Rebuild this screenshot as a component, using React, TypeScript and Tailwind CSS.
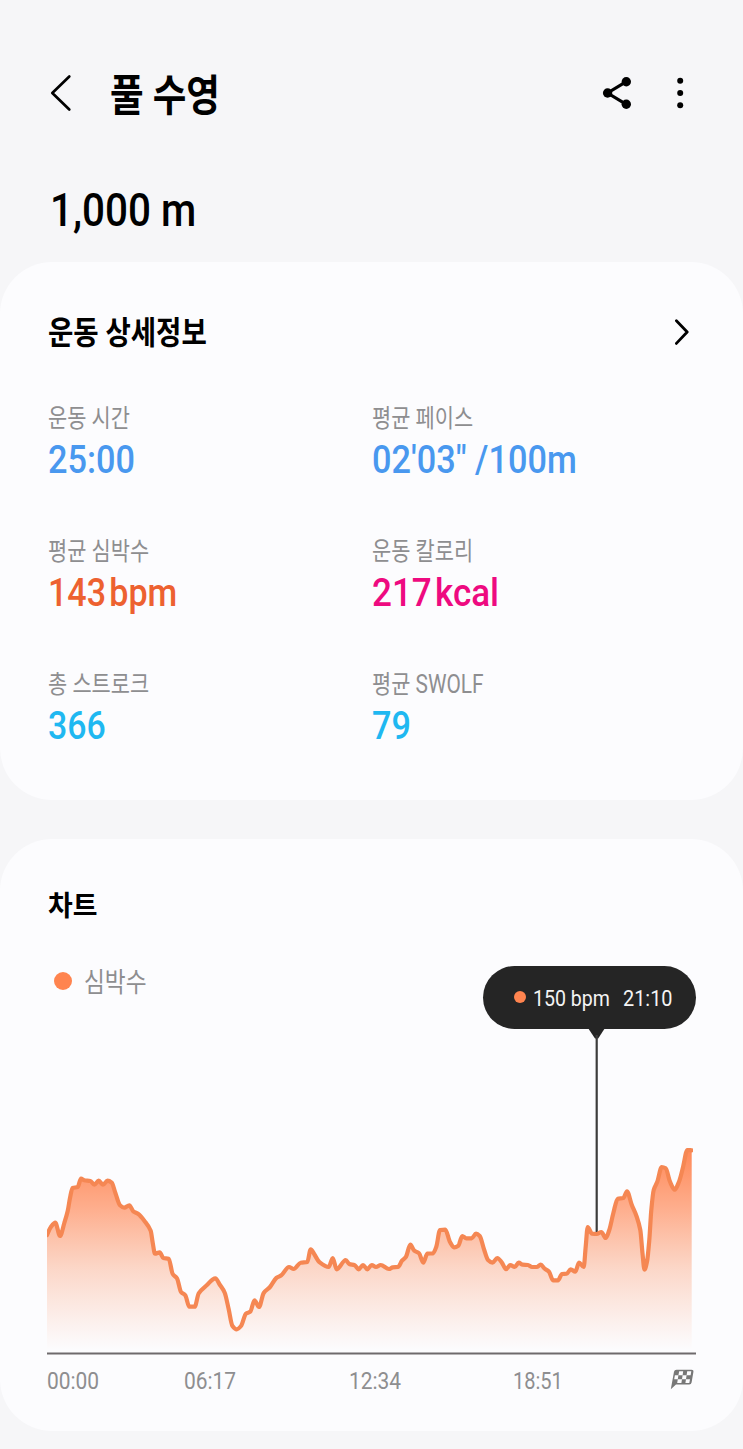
import type { ReactNode } from "react";

type Point = [number, number];

const HEART_RATE: Point[] = [
  [47, 1235], [50.7, 1227.3], [55.3, 1222.7], [60, 1236], [64.3, 1223], [67.7, 1211], [70, 1198], [72.5, 1188],
  [77.7, 1187], [81, 1178.7], [84.3, 1180.3], [90.3, 1181], [94.3, 1184.7], [98.7, 1180.7], [103, 1184.7], [107.5, 1180.7],
  [111.7, 1182.7], [115.3, 1192.7], [120, 1205.3], [124.3, 1207.7], [129.3, 1205.3], [133.3, 1211.3], [138.3, 1214],
  [144.3, 1220.7], [150.7, 1230.7], [152.7, 1242.7], [155, 1253.7], [159.7, 1252.3], [163.3, 1258], [168.7, 1258.7],
  [172.7, 1274], [177, 1278.3], [181, 1292], [185.3, 1295.3], [189.3, 1306.7], [194.7, 1306.7], [198.7, 1293.3],
  [206.7, 1285.3], [215.3, 1278.3], [220, 1285], [224.7, 1292.7], [228.7, 1309.3], [232.3, 1325.7], [236.7, 1329.3],
  [241, 1326], [246, 1313.7], [250.3, 1311.7], [254.5, 1300.3], [259, 1307], [263.7, 1293], [270, 1287], [276.3, 1278],
  [281.3, 1275.3], [289, 1267], [293.7, 1269], [300.7, 1262.7], [307.3, 1262], [310.7, 1249.3], [314.3, 1254.3],
  [319.3, 1262], [328.7, 1267], [332.7, 1258], [336.7, 1269.3], [345.7, 1260], [349.3, 1264], [354.7, 1265.3],
  [358.7, 1269.3], [363, 1265], [367.3, 1269.3], [371.7, 1265], [376, 1267], [380.7, 1265], [389, 1269], [392.7, 1267.3],
  [398, 1267], [402, 1260.7], [406, 1256.7], [410.3, 1244.7], [414.3, 1250.7], [419, 1253.3], [423.3, 1262.7],
  [427.3, 1253.7], [433, 1253.3], [436.3, 1246.7], [440, 1230], [445.3, 1229.7], [450, 1242], [454.3, 1247.3],
  [458.3, 1245.7], [462.3, 1236], [466.3, 1238.3], [471.7, 1238.3], [476, 1233.7], [479.7, 1236], [484, 1249.3],
  [488, 1260], [492.5, 1262.7], [497.3, 1258], [501.7, 1262.3], [506, 1269.2], [510.3, 1265], [514.7, 1267],
  [518.7, 1262.7], [522.7, 1264.7], [528, 1265], [532, 1267], [536.7, 1267], [540.7, 1264.7], [544.7, 1268.7],
  [549, 1271.7], [553, 1280.3], [558, 1280.3], [562, 1274], [566.7, 1273.7], [570.7, 1269.3], [575.3, 1271.7],
  [579, 1262.7], [583.7, 1267], [585.7, 1246.7], [587.7, 1227], [592, 1233.7], [596.7, 1234], [601.3, 1232],
  [605.7, 1238], [609.3, 1230], [613.3, 1213.3], [617.7, 1198.7], [623.3, 1198], [627, 1191.3], [631.7, 1204.7],
  [636.7, 1216.7], [640.3, 1230], [642.5, 1253.3], [644.5, 1269.7], [647, 1261.7], [649.3, 1240], [651.3, 1210],
  [653.7, 1190], [657.3, 1181.7], [661.7, 1167], [665.7, 1168.3], [670, 1181.7], [674.7, 1189.7], [679, 1181.7],
  [683, 1167.3], [687.3, 1150], [691.7, 1150.3],
];

// Monotone cubic interpolation: smooth between samples without overshooting peaks.
function smoothPath(points: Point[]): string {
  const n = points.length;
  const slope = (i: number) => (points[i + 1][1] - points[i][1]) / (points[i + 1][0] - points[i][0]);
  const tangent = (i: number) => {
    if (i === 0) return slope(0);
    if (i === n - 1) return slope(n - 2);
    const a = slope(i - 1);
    const b = slope(i);
    return a * b <= 0 ? 0 : (2 * a * b) / (a + b);
  };
  let d = `M${points[0][0]},${points[0][1]}`;
  for (let i = 0; i < n - 1; i++) {
    const [x0, y0] = points[i];
    const [x1, y1] = points[i + 1];
    const h = (x1 - x0) / 3;
    d += `C${x0 + h},${y0 + tangent(i) * h} ${x1 - h},${y1 - tangent(i + 1) * h} ${x1},${y1}`;
  }
  return d;
}

const LINE = smoothPath(HEART_RATE);

function Text({ className, children }: { className: string; children: ReactNode }) {
  return <span className={`inline-block origin-left whitespace-pre ${className}`}>{children}</span>;
}

function Stat({ label, children }: { label: string; children: ReactNode }) {
  return (
    <div className="flex h-[133px] flex-col items-start">
      <Text className="h-[33px] scale-x-[0.835] text-[25px] leading-[34px] text-[#8e8e90]">{label}</Text>
      <div className="flex h-[50px] items-center text-[38.5px] leading-[50px] font-medium">{children}</div>
    </div>
  );
}

function Header() {
  return (
    <header className="flex h-[60px] items-center pr-[53px] pl-[48px]">
      <svg className="h-[40px] w-[26px]" viewBox="0 0 26 40" fill="none" stroke="#000" strokeWidth="2.7" strokeLinecap="round" strokeLinejoin="round">
        <path d="M21.3 3.5 4.3 20 21.3 36.5" />
      </svg>
      <h1 className="ml-[36px] flex-1 pt-[5px]">
        <Text className="scale-x-[0.85] text-[43px] leading-[60px] font-bold">풀 수영</Text>
      </h1>
      <svg className="h-[36px] w-[32px] overflow-visible" viewBox="0 0 32 36" fill="#000">
        <path d="M28.3 6.7 9.6 18 28.3 29.3" fill="none" stroke="#000" strokeWidth="3.2" />
        <circle cx="9.6" cy="18" r="4.7" />
        <circle cx="28.3" cy="6.7" r="4.7" />
        <circle cx="28.3" cy="29.3" r="4.7" />
      </svg>
      <svg className="ml-[40px] h-[36px] w-[20px]" viewBox="0 0 20 36" fill="#000">
        <circle cx="10.2" cy="5.8" r="3" />
        <circle cx="10.2" cy="18" r="3" />
        <circle cx="10.2" cy="30.2" r="3" />
      </svg>
    </header>
  );
}

function DetailsCard() {
  return (
    <section className="h-[538px] rounded-[52px] bg-[#fcfcfe] pr-[48px] pl-[48px]">
      <div className="flex items-center justify-between pt-[43px]">
        <h2 className="h-[55px] pt-[2px]">
          <Text className="scale-x-[0.86] text-[32px] leading-[52px] font-bold">운동 상세정보</Text>
        </h2>
        <svg className="h-[30px] w-[20px]" viewBox="0 0 20 30" fill="none" stroke="#000" strokeWidth="2.8" strokeLinecap="round" strokeLinejoin="round">
          <path d="M1.4 2.7 12.2 14 1.4 25.4" />
        </svg>
      </div>
      <div className="mt-[42px] grid grid-cols-[324px_1fr]">
        <Stat label="운동 시간">
          <Text className="scale-x-[0.89] text-[#4998ef]">25:00</Text>
        </Stat>
        <Stat label="평균 페이스">
          <Text className="scale-x-[0.89] text-[#4998ef]">{"02'03\" /100m"}</Text>
        </Stat>
        <Stat label="평균 심박수">
          <Text className="scale-x-[0.885] [word-spacing:-6px] text-[#ed6130]">143 bpm</Text>
        </Stat>
        <Stat label="운동 칼로리">
          <Text className="scale-x-[0.91] [word-spacing:-6px] text-[#ee0a80]">217 kcal</Text>
        </Stat>
        <Stat label="총 스트로크">
          <Text className="scale-x-[0.88] text-[#1fb8f1]">366</Text>
        </Stat>
        <Stat label="평균 SWOLF">
          <Text className="scale-x-[0.89] text-[#1fb8f1]">79</Text>
        </Stat>
      </div>
    </section>
  );
}

function Tooltip() {
  return (
    <div className="absolute top-[127px] left-[483px] flex h-[63px] w-[213px] items-center rounded-full bg-[#252525] pt-[4px] pl-[31px] text-[21.5px] text-[#f4f4f4]">
      <span className="-mt-[5px] h-[12px] w-[12px] rounded-full bg-[#ff844f]" />
      <Text className="ml-[7px] w-[90px] scale-x-[0.91]">150 bpm</Text>
      <Text className="scale-x-[0.925]">21:10</Text>
    </div>
  );
}

function ChartCard() {
  return (
    <section className="relative mt-[39px] h-[592px] rounded-[52px] bg-[#fcfcfe]">
      <h2 className="h-[84px] pt-[46px] pl-[48px]">
        <Text className="scale-x-[0.96] text-[28px] leading-[44px] font-bold">차트</Text>
      </h2>
      <div className="mt-[38px] flex h-[40px] items-center pl-[54px]">
        <span className="h-[18px] w-[18px] rounded-full bg-[#ff844f]" />
        <Text className="ml-[12px] scale-x-[0.84] pt-[4px] text-[27px] leading-[40px] text-[#8e8e90]">심박수</Text>
      </div>
      <svg className="mt-[19px] block h-[340px] w-full" viewBox="0 1020 743 340">
        <defs>
          <linearGradient id="heart-fill" gradientUnits="userSpaceOnUse" x1="0" y1="1150" x2="0" y2="1350">
            <stop offset="0" stopColor="#ff8958" />
            <stop offset="0.3" stopColor="#ff8958" stopOpacity="0.67" />
            <stop offset="0.6" stopColor="#fb9162" stopOpacity="0.34" />
            <stop offset="1" stopColor="#fb9a70" stopOpacity="0" />
          </linearGradient>
          <clipPath id="plot">
            <rect x="47" y="1130" width="646" height="224" />
          </clipPath>
        </defs>
        <path d={`${LINE}L691.7,1354L47,1354Z`} fill="url(#heart-fill)" />
        <path d="M588 1028H605L598.2 1038.5H595Z" fill="#252525" />
        <path d="M596.7 1035V1232" stroke="#3c3c3c" strokeWidth="2.2" />
        <path d={LINE} clipPath="url(#plot)" fill="none" stroke="#f58753" strokeWidth="4.2" strokeLinejoin="round" strokeLinecap="round" />
        <path d="M47 1353.5H696" stroke="#6e6a6c" strokeWidth="2.2" />
      </svg>
      <div className="flex h-[40px] items-center pl-[47px] text-[23px] leading-[40px] text-[#8e8e90]">
        <Text className="w-[137px] scale-x-[0.91] pt-[4px]">00:00</Text>
        <Text className="w-[165px] scale-x-[0.91] pt-[4px]">06:17</Text>
        <Text className="w-[164px] scale-x-[0.91] pt-[4px]">12:34</Text>
        <Text className="w-[157px] scale-x-[0.87] pt-[4px]">18:51</Text>
        <svg className="h-[22px] w-[26px]" viewBox="0 0 26 22">
          <path d="M6.5 0.7H21.5Q23.8 0.7 23.4 3L21.6 13.6Q21.2 15.6 19.2 15.6H6L0.8 20.2 4 2.7Q4.4 0.7 6.5 0.7Z" fill="#777" />
          <path d="M9.2 2.3H13.2L12.6 6.3H8.4ZM17.2 2.3H21.3L20.6 6.3H16.6ZM4.9 6.3H8.4L7.8 10.2H4.2ZM12.6 6.3H16.6L16 10.2H12ZM7.8 10.2H12L11.4 14.1H7.2ZM16 10.2H20L19.3 14.1H15.4Z" fill="#fcfcfe" />
        </svg>
      </div>
      <Tooltip />
    </section>
  );
}

export default function App() {
  return (
    <main className="h-[1449px] w-[743px] overflow-hidden bg-[#f6f6f8] pt-[63px] font-[Roboto,'Noto_Sans_CJK_KR',sans-serif] text-black">
      <Header />
      <div className="flex h-[139px] items-start pt-[55px] pl-[50px]">
        <Text className="scale-x-[0.86] text-[47px] leading-[64px] font-medium">1,000 m</Text>
      </div>
      <DetailsCard />
      <ChartCard />
    </main>
  );
}
